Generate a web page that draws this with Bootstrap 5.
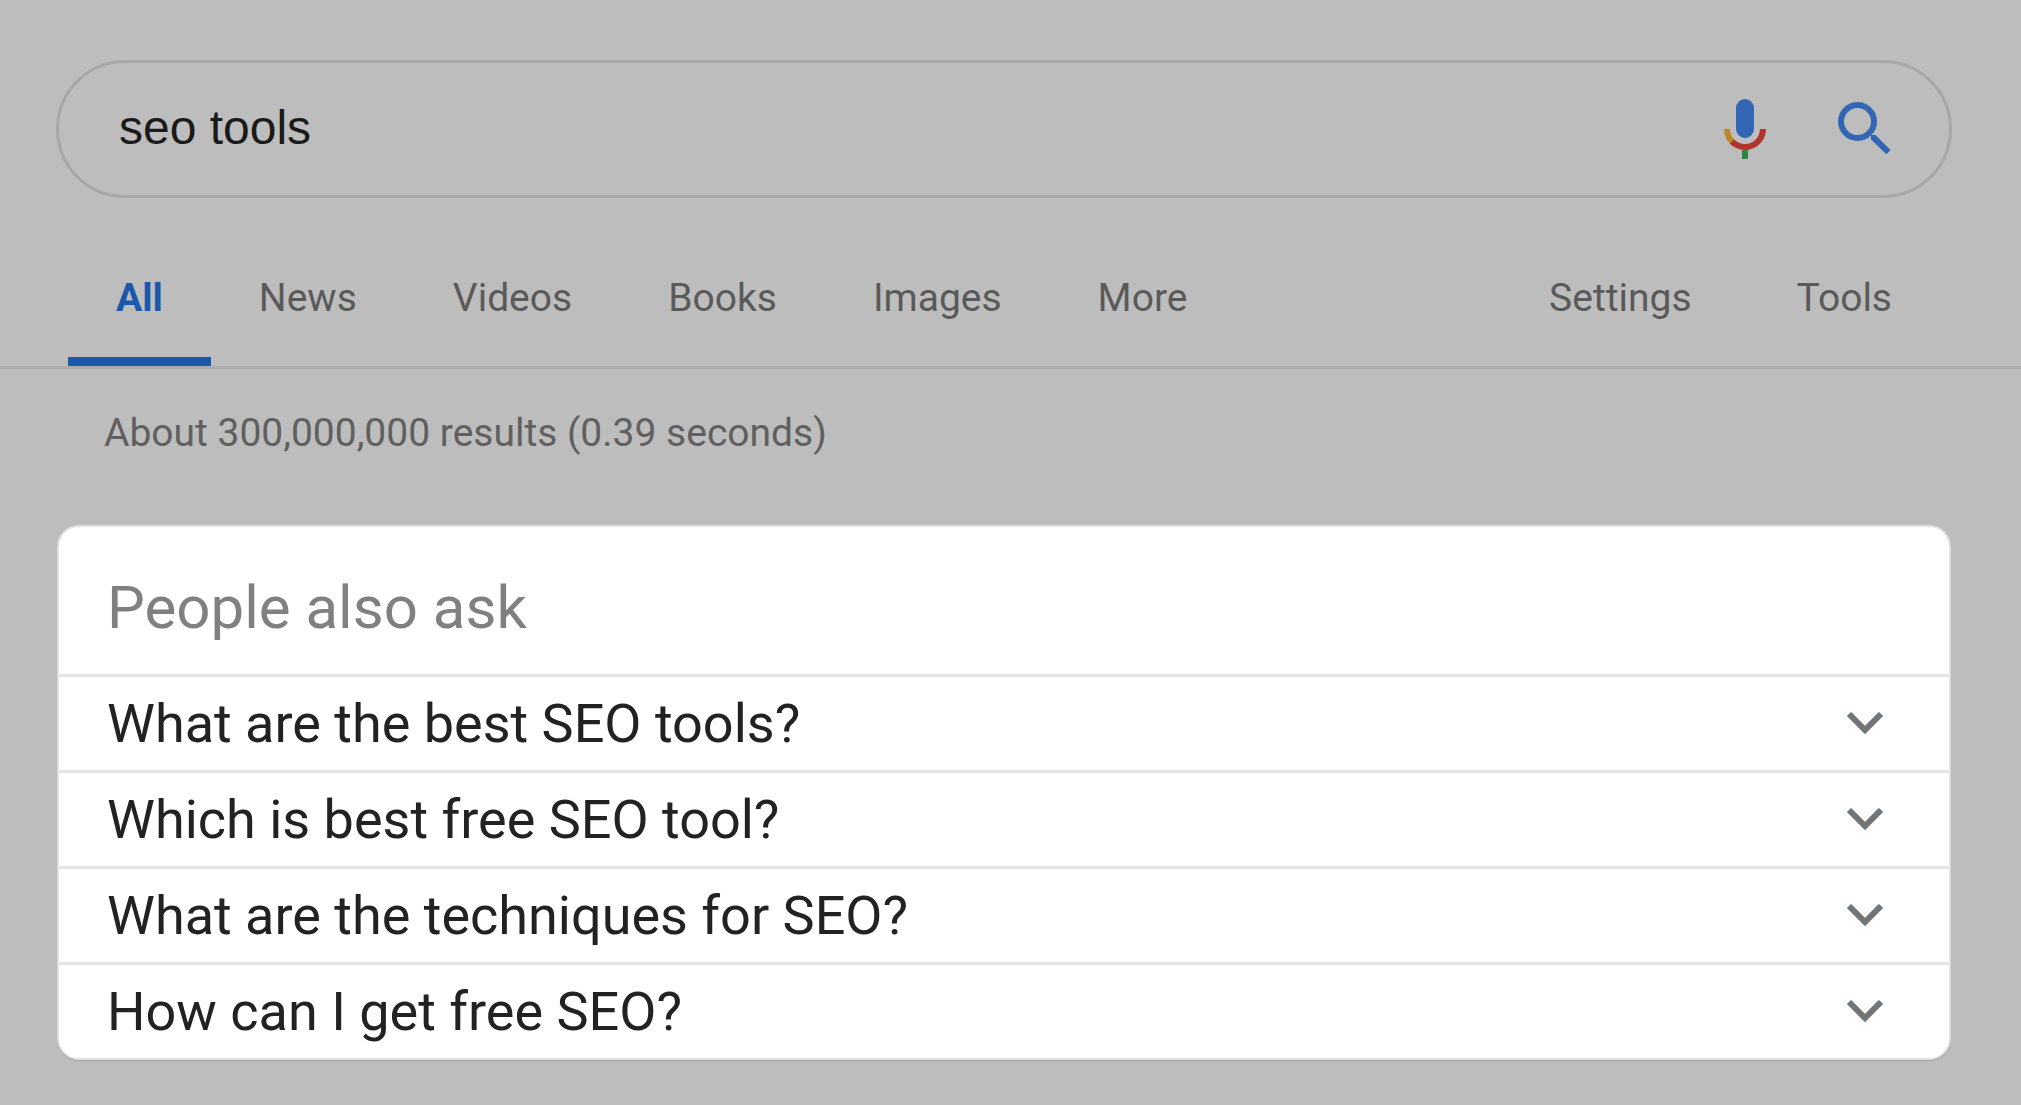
<!DOCTYPE html>
<html lang="en">
<head>
<meta charset="utf-8">
<meta name="viewport" content="width=device-width, initial-scale=1">
<title>seo tools - Search</title>
<link href="https://cdn.jsdelivr.net/npm/bootstrap@5.3.0/dist/css/bootstrap.min.css" rel="stylesheet">
<style>
  body { background: #bdbdbd; font-family: Roboto, sans-serif; color: #222; }
  .search-wrap { padding: 60px 69px 0 56px; }
  .search-box { height: 138px; border: 3px solid #a7a7ab; border-radius: 69px; padding: 0 56px 2px 60px; }
  .search-input, .search-input:focus { background: transparent; color: #1a1a1a; font: 48px/56px "Liberation Sans", Arial, sans-serif; box-shadow: none; }
  .icon-gap { gap: 67px; }
  .tabs-bar { border-bottom: 3px solid #adadad; padding: 0 81px 0 68px; margin-top: 66px; }
  .tab-link { display: block; padding: 12px 48px 37px; font-size: 39px; line-height: 44px; color: #5a5a5a; text-decoration: none; border-bottom: 9px solid transparent; }
  .tab-link.active { color: #1a58ac; font-weight: 700; border-color: #1a58ac; }
  .tool-gap { gap: 9px; }
  .result-stats { padding: 42px 104px 0; font-size: 39px; line-height: 44px; color: #606060; }
  .ask-wrap { padding: 70px 70px 44px 57px; }
  .ask-card { border: 2px solid #dfe1e5; border-radius: 22px; overflow: hidden; box-shadow: 0 1px 1px #a0a0a3; background: #fff; }
  .ask-title { font-size: 60px; line-height: 70px; color: #808080; padding: 46px 48px 31px; }
  .ask-row { height: 96px; border: 0; border-top: 3px solid #e4e4e4; background: #fff; font-size: 54px; line-height: 64px; color: #222; padding: 0 65px 0 48px; }
</style>
</head>
<body>
<header>
  <div class="search-wrap">
    <form class="search-box d-flex align-items-center">
      <input class="search-input form-control border-0 p-0 flex-grow-1" type="text" aria-label="Search" value="seo tools">
      <div class="icon-gap d-flex align-items-center flex-shrink-0">
        <button type="button" class="btn p-0 border-0 d-flex" aria-label="Search by voice">
          <svg width="50" height="62" viewBox="0 0 50 62" fill="none">
            <rect x="16" y="2" width="18" height="39" rx="9" fill="#3367b5"/>
            <path d="M7 32a18 18 0 0 0 6 13.4" stroke="#ba8926" stroke-width="6"/>
            <path d="M12 44.5A18 18 0 0 0 43 32" stroke="#b0352c" stroke-width="6"/>
            <path d="M25 53v9" stroke="#2f8344" stroke-width="6"/>
          </svg>
        </button>
        <button type="submit" class="btn p-0 border-0 d-flex" aria-label="Search">
          <svg width="56" height="56" viewBox="0 0 56 56" fill="none" stroke="#3367b5">
            <circle cx="20.5" cy="21.5" r="16.5" stroke-width="6"/>
            <path d="M34 35h4.500l15 15-4.200 4.200L34 39.500z" fill="#3367b5" stroke="none"/>
          </svg>
        </button>
      </div>
    </form>
  </div>
  <nav class="tabs-bar d-flex justify-content-between">
    <div class="d-flex">
      <a class="tab-link active" href="#" aria-current="page">All</a>
      <a class="tab-link" href="#">News</a>
      <a class="tab-link" href="#">Videos</a>
      <a class="tab-link" href="#">Books</a>
      <a class="tab-link" href="#">Images</a>
      <a class="tab-link" href="#">More</a>
    </div>
    <div class="tool-gap d-flex">
      <a class="tab-link" href="#">Settings</a>
      <a class="tab-link" href="#">Tools</a>
    </div>
  </nav>
</header>
<main>
  <div class="result-stats">About 300,000,000 results (0.39 seconds)</div>
  <div class="ask-wrap">
    <section class="ask-card">
      <h2 class="ask-title fw-normal m-0">People also ask</h2>
      <button type="button" class="ask-row w-100 d-flex align-items-center justify-content-between text-start">What are the best SEO tools?
        <svg width="38" height="24" viewBox="0 0 38 24" fill="none" stroke="#70757a" stroke-width="6"><path d="M3 2l16 16L35 2"/></svg></button>
      <button type="button" class="ask-row w-100 d-flex align-items-center justify-content-between text-start">Which is best free SEO tool?
        <svg width="38" height="24" viewBox="0 0 38 24" fill="none" stroke="#70757a" stroke-width="6"><path d="M3 2l16 16L35 2"/></svg></button>
      <button type="button" class="ask-row w-100 d-flex align-items-center justify-content-between text-start">What are the techniques for SEO?
        <svg width="38" height="24" viewBox="0 0 38 24" fill="none" stroke="#70757a" stroke-width="6"><path d="M3 2l16 16L35 2"/></svg></button>
      <button type="button" class="ask-row w-100 d-flex align-items-center justify-content-between text-start">How can I get free SEO?
        <svg width="38" height="24" viewBox="0 0 38 24" fill="none" stroke="#70757a" stroke-width="6"><path d="M3 2l16 16L35 2"/></svg></button>
    </section>
  </div>
</main>
<script src="https://cdn.jsdelivr.net/npm/bootstrap@5.3.0/dist/js/bootstrap.bundle.min.js"></script>
</body>
</html>
